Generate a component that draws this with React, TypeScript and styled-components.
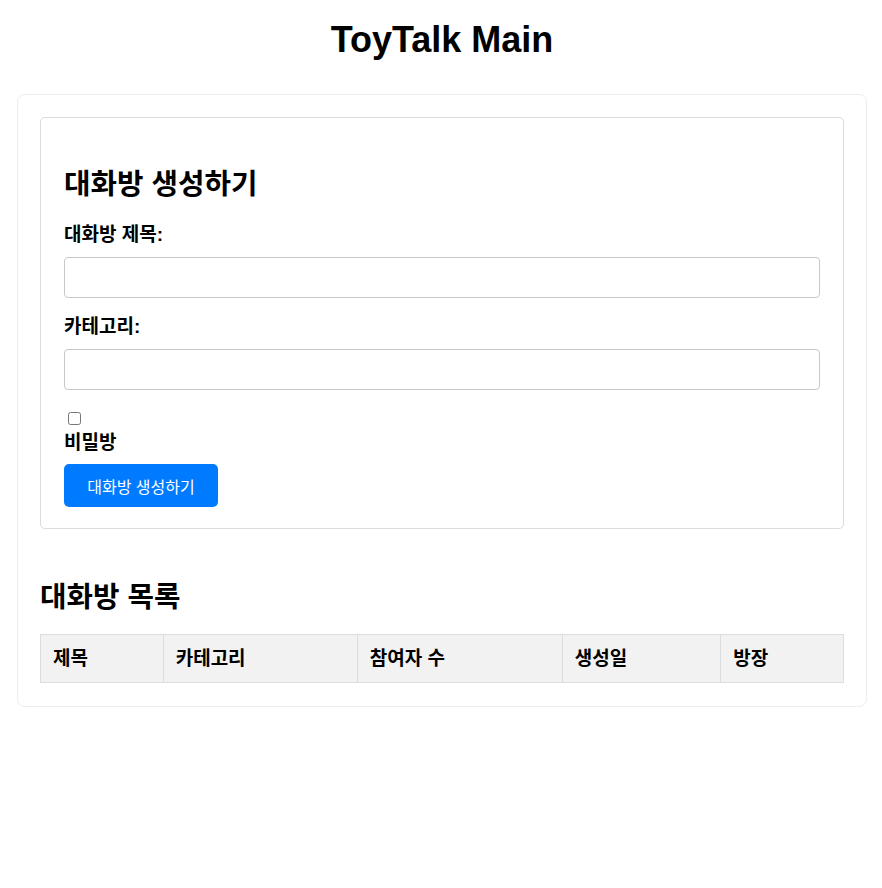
import React from "react";
import styled, { createGlobalStyle } from "styled-components";

const Global = createGlobalStyle`
  html, body { margin: 0; padding: 0; background: #ffffff; }
  body {
    font-family: "Liberation Sans", Arial, "Noto Sans CJK JP", sans-serif;
    color: #000;
  }
  * { box-sizing: border-box; }
`;

const Page = styled.div`
  padding: 19px 0 40px 2px;
`;

const Title = styled.h1`
  margin: 0 0 34px;
  text-align: center;
  font-size: 36px;
  line-height: 41px;
  font-weight: 700;
`;

const Container = styled.main`
  width: 850px;
  margin: 0 auto;
  padding: 22px 22px 23px;
  border: 1px solid #ececec;
  border-radius: 8px;
  background: #fff;
`;

const FormBox = styled.section`
  border: 1px solid #dcdcdc;
  border-radius: 5px;
  padding: 20px 23px 21px;
`;

const Heading = styled.h2<{ $top: number; $bottom: number }>`
  margin: ${(p) => p.$top}px 0 ${(p) => p.$bottom}px;
  font-size: 28.8px;
  line-height: 32px;
  font-weight: 700;
`;

const Label = styled.label`
  display: block;
  font-size: 19px;
  line-height: 24px;
  font-weight: 700;
  margin-bottom: 10px;
`;

const TextInput = styled.input<{ $after: number }>`
  display: block;
  width: 100%;
  height: 41px;
  margin: 0 0 ${(p) => p.$after}px;
  padding: 10px;
  border: 1px solid #c8c8c8;
  border-radius: 4px;
  font-size: 16px;
  font-family: inherit;
  background: #fff;
`;

const Check = styled.input`
  display: block;
  width: 13px;
  height: 13px;
  margin: 22px 0 6px 4px;
`;

const CheckLabel = styled.label`
  display: block;
  font-size: 19px;
  line-height: 24px;
  font-weight: 700;
  margin-bottom: 9px;
`;

const Button = styled.button`
  display: block;
  width: 154px;
  height: 43px;
  padding: 0;
  border: none;
  border-radius: 5px;
  background: #007bff;
  color: #fff;
  font-family: inherit;
  font-size: 16px;
  cursor: pointer;
`;

const Table = styled.table`
  width: 100%;
  border-collapse: collapse;
`;

const Th = styled.th`
  background: #f2f2f2;
  border: 1px solid #dddddd;
  padding: 12px;
  text-align: left;
  font-size: 19px;
  line-height: 23px;
  font-weight: 700;
`;

export default function App() {
  return (
    <Page>
      <Global />
      <Title>ToyTalk Main</Title>
      <Container>
        <FormBox>
          <Heading $top={30} $bottom={23}>대화방 생성하기</Heading>
          <Label htmlFor="title">대화방 제목:</Label>
          <TextInput id="title" type="text" $after={17} />
          <Label htmlFor="category">카테고리:</Label>
          <TextInput id="category" type="text" $after={18} />
          <Check id="secret" type="checkbox" />
          <CheckLabel htmlFor="secret">비밀방</CheckLabel>
          <Button type="button">대화방 생성하기</Button>
        </FormBox>
        <Heading $top={52} $bottom={21}>대화방 목록</Heading>
        <Table>
          <thead>
            <tr>
              <Th>제목</Th>
              <Th>카테고리</Th>
              <Th>참여자 수</Th>
              <Th>생성일</Th>
              <Th>방장</Th>
            </tr>
          </thead>
          <tbody />
        </Table>
      </Container>
    </Page>
  );
}
